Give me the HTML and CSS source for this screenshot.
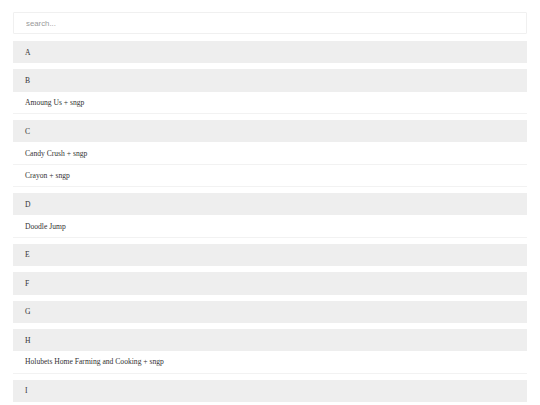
FILE: index.html
```html
<!DOCTYPE html>
<html>
<head>
<meta charset="utf-8">
<link rel="stylesheet" href="styles.css">
</head>
<body>
<div class="page">
  <div class="search"><input type="text" placeholder="search..."></div>
  <div class="section"><div class="head">A</div></div>
  <div class="section"><div class="head">B</div><div class="item">Amoung Us + sngp</div></div>
  <div class="section"><div class="head">C</div><div class="item">Candy Crush + sngp</div><div class="item">Crayon + sngp</div></div>
  <div class="section"><div class="head">D</div><div class="item">Doodle Jump</div></div>
  <div class="section"><div class="head">E</div></div>
  <div class="section"><div class="head">F</div></div>
  <div class="section"><div class="head">G</div></div>
  <div class="section"><div class="head">H</div><div class="item">Holubets Home Farming and Cooking + sngp</div></div>
  <div class="section"><div class="head">I</div></div>
</div>
</body>
</html>
```
FILE: styles.css
```css
html, body { margin: 0; padding: 0; background: #fff; }
body { font-family: "Liberation Serif", "Times New Roman", serif; color: #333; }
.page { padding: 12px 13px; }
.search { margin-bottom: 7px; }
.search input {
  display: block;
  width: 100%;
  box-sizing: border-box;
  height: 22px;
  border: 1px solid #f0f0f0;
  border-radius: 1px;
  padding: 0 12px;
  font-family: "Liberation Sans", Arial, sans-serif;
  font-size: 7.8px;
  color: #555;
  outline: none;
  background: #fff;
}
.search input::placeholder { color: #999; }
.section { margin-bottom: 6px; }
.head {
  height: 22.4px;
  background: #eeeeee;
  display: flex;
  align-items: center;
  padding-left: 12px;
  font-size: 7.6px;
  color: #333;
}
.item {
  height: 21.3px;
  border-bottom: 1px solid #f2f2f2;
  display: flex;
  align-items: center;
  padding-left: 12px;
  font-size: 7.6px;
  color: #333;
}
```
